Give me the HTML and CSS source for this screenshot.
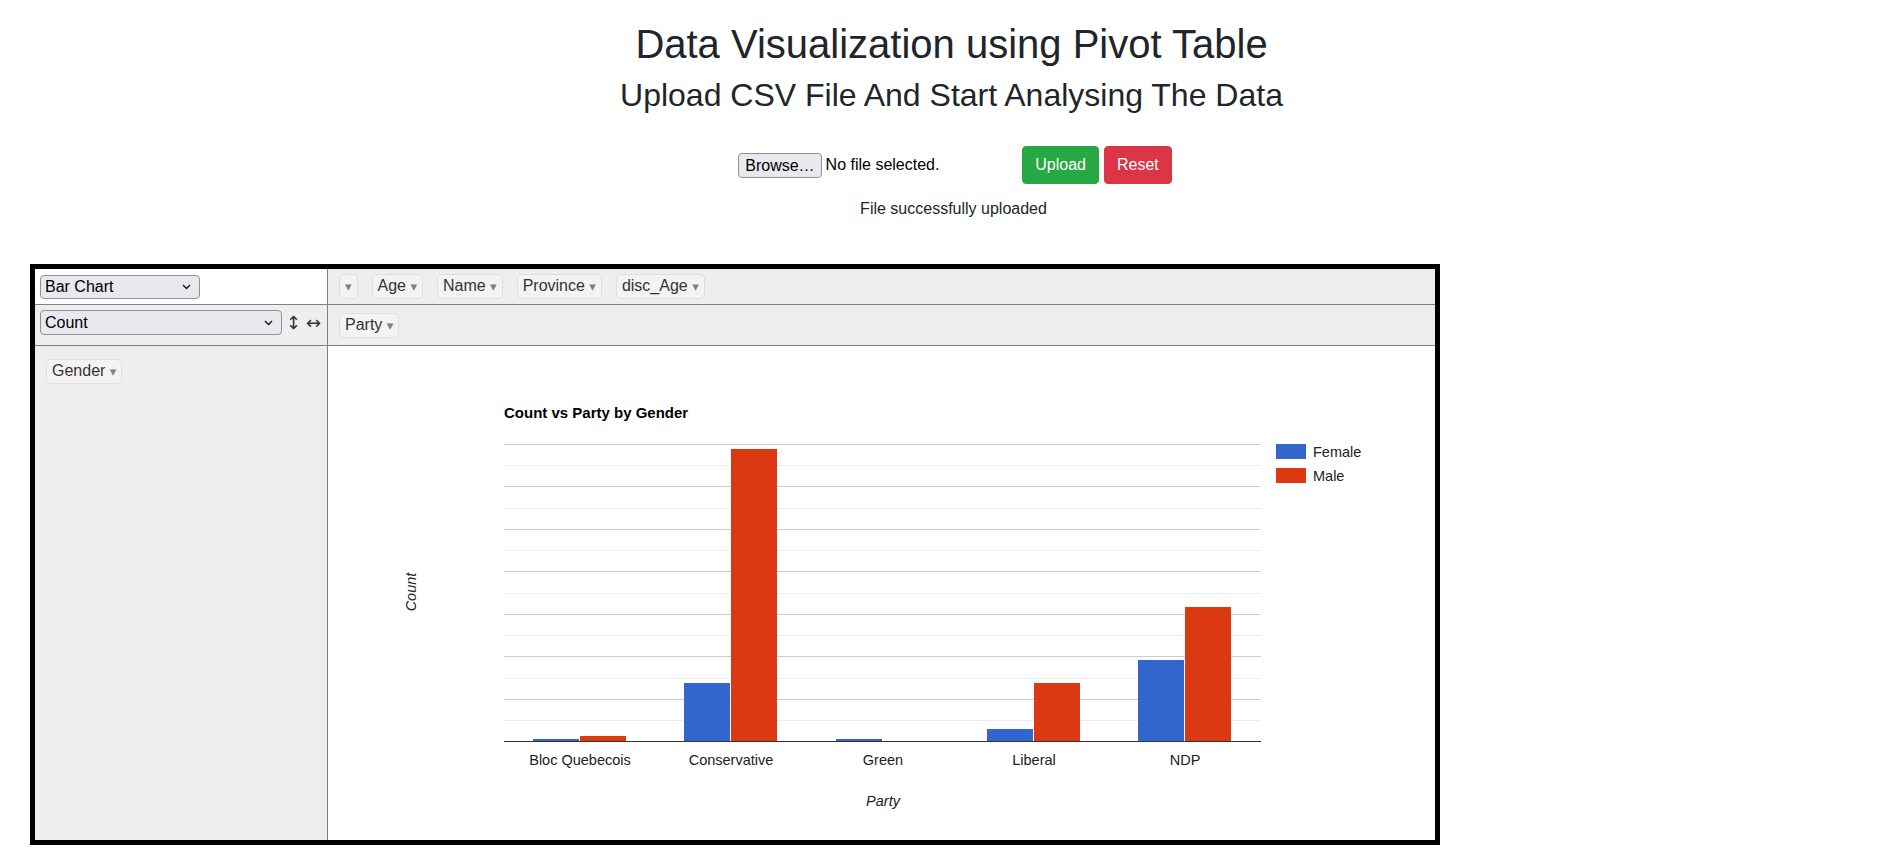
FILE: index.html
```html
<!doctype html>
<html>
<head>
<meta charset="utf-8">
<title>Data Visualization using Pivot Table</title>
<link rel="stylesheet" href="styles.css">
</head>
<body>

<header class="intro">
  <h1>Data Visualization using Pivot Table</h1>
  <h2>Upload CSV File And Start Analysing The Data</h2>
</header>

<form class="upload" onsubmit="return false">
  <div class="file-field">
    <span class="browse">Browse…</span>
    <span class="file-name">No file selected.</span>
  </div>
  <button class="btn btn-upload" type="button">Upload</button>
  <button class="btn btn-reset" type="button">Reset</button>
</form>

<p class="status">File successfully uploaded</p>

<!-- pivot ui: renderer / unused attrs, aggregator / cols, rows / chart -->
<div class="pivot">
  <div class="cell renderer-cell">
    <div class="fake-select renderer-select">
      <span>Bar Chart</span>
      <svg class="chev" width="9" height="6" viewBox="0 0 9 6"><path d="M1 1l3.5 3.5L8 1" fill="none" stroke="#111" stroke-width="1.3"/></svg>
    </div>
  </div>
  <div class="cell axis unused">
    <ul class="attr-list">
      <li><span class="attr"><span class="tri">▾</span></span></li>
      <li><span class="attr">Age <span class="tri">▾</span></span></li>
      <li><span class="attr">Name <span class="tri">▾</span></span></li>
      <li><span class="attr">Province <span class="tri">▾</span></span></li>
      <li><span class="attr">disc_Age <span class="tri">▾</span></span></li>
    </ul>
  </div>

  <div class="cell vals">
    <div class="fake-select agg-select">
      <span>Count</span>
      <svg class="chev" width="9" height="6" viewBox="0 0 9 6"><path d="M1 1l3.5 3.5L8 1" fill="none" stroke="#111" stroke-width="1.3"/></svg>
    </div>
    <a class="order">↕</a>
    <a class="order">↔</a>
  </div>
  <div class="cell axis cols">
    <ul class="attr-list">
      <li><span class="attr">Party <span class="tri">▾</span></span></li>
    </ul>
  </div>

  <div class="cell axis rows">
    <ul class="attr-list vertical">
      <li><span class="attr">Gender <span class="tri">▾</span></span></li>
    </ul>
  </div>
  <div class="cell render-area">
    <svg class="chart" width="1107" height="494" viewBox="0 0 1107 494">
      <text class="chart-title" x="176" y="72">Count vs Party by Gender</text>

      <g shape-rendering="crispEdges">
        <rect x="176" y="98"  width="757" height="1" fill="#cccccc"/>
        <rect x="176" y="119" width="757" height="1" fill="#ebebeb"/>
        <rect x="176" y="140" width="757" height="1" fill="#cccccc"/>
        <rect x="176" y="162" width="757" height="1" fill="#ebebeb"/>
        <rect x="176" y="183" width="757" height="1" fill="#cccccc"/>
        <rect x="176" y="204" width="757" height="1" fill="#ebebeb"/>
        <rect x="176" y="225" width="757" height="1" fill="#cccccc"/>
        <rect x="176" y="247" width="757" height="1" fill="#ebebeb"/>
        <rect x="176" y="268" width="757" height="1" fill="#cccccc"/>
        <rect x="176" y="289" width="757" height="1" fill="#ebebeb"/>
        <rect x="176" y="310" width="757" height="1" fill="#cccccc"/>
        <rect x="176" y="332" width="757" height="1" fill="#ebebeb"/>
        <rect x="176" y="353" width="757" height="1" fill="#cccccc"/>
        <rect x="176" y="374" width="757" height="1" fill="#ebebeb"/>

        <!-- Female -->
        <rect x="205" y="393" width="46" height="2" fill="#3366cc"/>
        <rect x="356" y="337" width="46" height="58" fill="#3366cc"/>
        <rect x="508" y="393" width="46" height="2" fill="#3366cc"/>
        <rect x="659" y="383" width="46" height="12" fill="#3366cc"/>
        <rect x="810" y="314" width="46" height="81" fill="#3366cc"/>
        <!-- Male -->
        <rect x="252" y="390" width="46" height="5" fill="#dc3912"/>
        <rect x="403" y="103" width="46" height="292" fill="#dc3912"/>
        <rect x="706" y="337" width="46" height="58" fill="#dc3912"/>
        <rect x="857" y="261" width="46" height="134" fill="#dc3912"/>

        <rect x="176" y="395" width="757" height="1" fill="#333333"/>

        <rect x="948" y="98"  width="30" height="15" fill="#3366cc"/>
        <rect x="948" y="122" width="30" height="15" fill="#dc3912"/>
      </g>

      <text class="legend" x="985" y="111">Female</text>
      <text class="legend" x="985" y="135">Male</text>

      <g class="cat" text-anchor="middle">
        <text x="252" y="419">Bloc Quebecois</text>
        <text x="403" y="419">Conservative</text>
        <text x="555" y="419">Green</text>
        <text x="706" y="419">Liberal</text>
        <text x="857" y="419">NDP</text>
      </g>

      <text class="axis-title" x="555" y="460" text-anchor="middle">Party</text>
      <text class="axis-title" x="88" y="246" text-anchor="middle" transform="rotate(-90 88 246)">Count</text>
    </svg>
  </div>
</div>

</body>
</html>
```

FILE: styles.css
```css
html { font-family: "Liberation Sans", Arial, sans-serif; }
body { margin: 0; color: #212529; font-size: 16px; line-height: 1.5; }

.intro { padding-top: 20px; text-align: center; }
.intro h1 { margin: 0 0 8px; font-size: 40px; line-height: 48px; font-weight: 400; }
.intro h2 { margin: 0; font-size: 32px; line-height: 38px; font-weight: 400; }

/* upload form */
.upload { display: flex; justify-content: center; align-items: center; margin-top: 32px; padding-left: 7px; }
.file-field { width: 280px; margin-right: 4px; display: flex; align-items: center; }
.browse {
  background: #e9e9ed; border: 1px solid #8f8f9d; border-radius: 4px;
  padding: 1px 6px; line-height: 21px; color: #000; margin-right: 4px;
}
.file-name { color: #000; }

.btn {
  font: inherit; line-height: 24px; padding: 6px 12px; border: 1px solid transparent;
  border-radius: 4px; color: #fff; cursor: pointer;
}
.btn-upload { background: #28a745; border-color: #28a745; margin-right: 5px; }
.btn-reset { background: #dc3545; border-color: #dc3545; }

.status { margin: 13px 0 0; padding-left: 4px; text-align: center; }

/* pivot table ui */
.pivot {
  box-sizing: border-box; width: 1410px; margin: 43px 0 0 30px;
  border: 5px solid #000; color: #333;
  display: grid; grid-template-columns: 293px 1107px; grid-template-rows: 36px 41px 494px;
}
.cell { box-sizing: border-box; border-bottom: 1px solid gray; }
.renderer-cell, .vals, .rows { border-right: 1px solid gray; }
.rows, .render-area { border-bottom: 0; }

.axis, .vals { background: #eee; }

.renderer-cell { display: flex; align-items: center; padding: 0 5px; }
.vals { display: flex; align-items: flex-start; padding: 5px 5px 0; }
.unused, .cols { display: flex; align-items: center; padding: 0 5px; }
.rows { padding: 13px 0 0 5px; }

.fake-select {
  box-sizing: border-box; display: flex; align-items: center; justify-content: space-between;
  background: #e9e9ed; border: 1px solid #8f8f9d; border-radius: 4px;
  padding: 0 8px 0 4px; color: #000;
}
.renderer-select { width: 160px; height: 24px; }
.agg-select { width: 242px; height: 25px; }

.order { color: #333; text-decoration: none; line-height: 25px; font-family: "DejaVu Sans", sans-serif; font-size: 18px; }
.order:first-of-type { margin-left: 4px; }
.order + .order { margin-left: 5px; }

.attr-list { list-style: none; margin: 0; padding: 0; display: flex; gap: 2px; }
.attr-list li { padding: 0 6px; }
.attr-list.vertical { display: block; }

.attr {
  display: inline-block; background: #f3f3f3; border: 1px solid #dedede; border-radius: 5px;
  padding: 2px 5px; line-height: 18px; white-space: nowrap;
}
.tri { color: grey; font-family: "DejaVu Sans", sans-serif; font-size: 13px; }

.render-area { background: #fff; }
.chart { display: block; font-family: "Liberation Sans", Arial, sans-serif; }
.chart-title { font-size: 15px; font-weight: 700; fill: #000; }
.legend, .cat text { font-size: 14.5px; fill: #222; }
.axis-title { font-size: 14.5px; font-style: italic; fill: #222; }
```
